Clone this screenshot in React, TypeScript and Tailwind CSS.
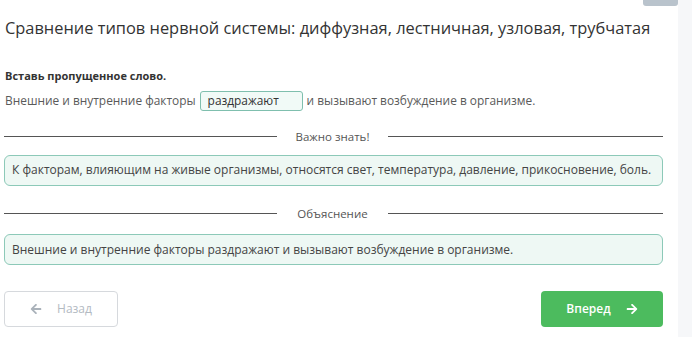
import { FaArrowLeft, FaArrowRight } from 'react-icons/fa'

function Divider({ label }: { label: string }) {
  return (
    <div className="flex items-center">
      <div className="h-px w-[273px] bg-[#555]" />
      <div className="flex-1 text-center text-[11.5px] text-[#555]">{label}</div>
      <div className="h-px w-[275px] bg-[#555]" />
    </div>
  )
}

function InfoBox({ children }: { children: React.ReactNode }) {
  return (
    <div className="flex h-[31px] items-center rounded-[6px] border border-[#8cc9b8] bg-[#eef8f4] pl-[7px] text-[12px] text-[#444]">
      {children}
    </div>
  )
}

export default function App() {
  return (
    <div className="flex h-[337px] w-[692px] bg-white font-['Open_Sans',sans-serif]">
      <div className="w-[678px] px-1">
        <h1 className="mt-[17px] pl-px text-[16.4px] leading-[22px] text-[#333]">
          Сравнение типов нервной системы: диффузная, лестничная, узловая, трубчатая
        </h1>

        <p className="mt-[29px] pl-px text-[11px] font-bold text-[#333]">
          Вставь пропущенное слово.
        </p>
        <div className="mt-[6px] flex items-center pl-px text-[11.9px] text-[#5a5a5a]">
          <span>Внешние и внутренние факторы</span>
          <span className="mx-[4px] flex h-[20px] w-[103px] items-center rounded-[3px] border border-[#7fbfae] bg-[#f1faf7] pl-[7px] text-[#333]">
            раздражают
          </span>
          <span>и вызывают возбуждение в организме.</span>
        </div>

        <div className="mt-[17px] w-[659px]">
          <Divider label="Важно знать!" />
          <div className="mt-[10px]">
            <InfoBox>
              К факторам, влияющим на живые организмы, относятся свет, температура, давление, прикосновение, боль.
            </InfoBox>
          </div>
          <div className="mt-[19px]">
            <Divider label="Объяснение" />
          </div>
          <div className="mt-[12px]">
            <InfoBox>Внешние и внутренние факторы раздражают и вызывают возбуждение в организме.</InfoBox>
          </div>

          <div className="mt-[26px] flex justify-between">
            <button className="flex h-[36px] w-[114px] items-center justify-center gap-[15px] rounded-[4px] border border-[#d6d9dd] bg-white text-[12px] text-[#b3bac2]">
              <FaArrowLeft className="h-[12px] w-[12px] text-[#aab2ba]" />
              <span>Назад</span>
            </button>
            <button className="flex h-[36px] w-[122px] items-center justify-center gap-[15px] rounded-[4px] bg-[#4cbb5e] text-[12px] font-semibold text-white">
              <span>Вперед</span>
              <FaArrowRight className="h-[12px] w-[12px]" />
            </button>
          </div>
        </div>
      </div>
      <div className="relative flex-1 bg-[#f6f7f9]">
        <div className="absolute right-[14px] top-0 h-[6px] w-[35px] rounded-b-[3px] bg-[#b9c3cc]" />
      </div>
    </div>
  )
}
